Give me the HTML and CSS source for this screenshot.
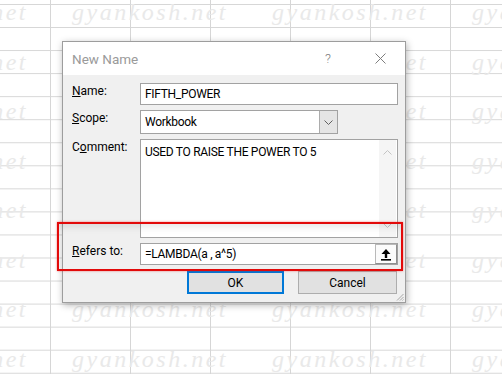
FILE: index.html
```html
<!DOCTYPE html>
<html>
<head>
<meta charset="utf-8">
<link rel="stylesheet" href="styles.css">
</head>
<body>
<div class="sheet">
  <div class="watermark">
    <div class="wm-row"><span>gyankosh.net</span><span>gyankosh.net</span><span>gyankosh.net</span><span>gyankosh.net</span></div>
    <div class="wm-row"><span>gyankosh.net</span><span class="covered">gyankosh.net</span><span>gyankosh.net</span><span>gyankosh.net</span></div>
    <div class="wm-row"><span>gyankosh.net</span><span class="covered">gyankosh.net</span><span>gyankosh.net</span><span>gyankosh.net</span></div>
    <div class="wm-row"><span>gyankosh.net</span><span class="covered">gyankosh.net</span><span>gyankosh.net</span><span>gyankosh.net</span></div>
    <div class="wm-row"><span>gyankosh.net</span><span class="covered">gyankosh.net</span><span>gyankosh.net</span><span>gyankosh.net</span></div>
    <div class="wm-row"><span>gyankosh.net</span><span class="covered">gyankosh.net</span><span>gyankosh.net</span><span>gyankosh.net</span></div>
    <div class="wm-row"><span>gyankosh.net</span><span>gyankosh.net</span><span>gyankosh.net</span><span>gyankosh.net</span></div>
    <div class="wm-row"><span>gyankosh.net</span><span>gyankosh.net</span><span>gyankosh.net</span><span>gyankosh.net</span></div>
  </div>

  <div class="dialog">
    <div class="titlebar">
      <span class="title">New Name</span>
      <span class="help">?</span>
      <span class="close">
        <svg width="11" height="11" viewBox="0 0 11 11"><path d="M0.5 0.5 L10.5 10.5 M10.5 0.5 L0.5 10.5" stroke="#7d7d7d" stroke-width="1" fill="none"/></svg>
      </span>
    </div>
    <div class="form">
      <div class="label"><u>N</u>ame:</div>
      <div class="field"><span class="val">FIFTH_POWER</span></div>

      <div class="label"><u>S</u>cope:</div>
      <div class="combo">
        <span class="val">Workbook</span>
        <span class="drop">
          <svg width="9" height="5" viewBox="0 0 9 5"><path d="M0.5 0.5 L4.5 4.5 L8.5 0.5" stroke="#606060" stroke-width="1" fill="none"/></svg>
        </span>
      </div>

      <div class="label">C<u>o</u>mment:</div>
      <div class="memo">
        <div class="memo-text">USED TO RAISE THE POWER TO 5</div>
        <div class="scroll">
          <svg width="9" height="5" viewBox="0 0 9 5"><path d="M0.5 4.5 L4.5 0.5 L8.5 4.5" stroke="#c4c4c4" stroke-width="1" fill="none"/></svg>
          <svg width="9" height="5" viewBox="0 0 9 5"><path d="M0.5 0.5 L4.5 4.5 L8.5 0.5" stroke="#c4c4c4" stroke-width="1" fill="none"/></svg>
        </div>
      </div>

      <div class="label"><u>R</u>efers to:</div>
      <div class="field refers">
        <span class="val">=LAMBDA(a , a^5)</span>
        <span class="collapse">
          <svg width="12" height="13" viewBox="0 0 12 13">
            <path d="M6 1 L10.5 6 L7.2 6 L7.2 10 L4.8 10 L4.8 6 L1.5 6 Z" fill="#000"/>
            <rect x="1" y="11" width="10" height="1.6" fill="#000"/>
          </svg>
        </span>
      </div>

      <div class="buttons">
        <button class="btn ok">OK</button>
        <button class="btn cancel">Cancel</button>
      </div>
    </div>
    <svg class="grip" width="9" height="9" viewBox="0 0 9 9"><path d="M8.5 2 L2 8.5 M8.5 5 L5 8.5 M8.5 7.5 L7.5 8.5" stroke="#a8a8a8" stroke-width="1" fill="none"/></svg>
  </div>

  <div class="highlight"></div>
</div>
</body>
</html>
```

FILE: styles.css
```css
* { box-sizing: border-box; }
html, body { margin: 0; padding: 0; }
body {
  width: 502px;
  height: 374px;
  overflow: hidden;
  font-family: Roboto, "Noto Sans", sans-serif;
  background-color: #fff;
  background-image:
    linear-gradient(to right, #d6d6d6 1px, transparent 1px),
    linear-gradient(to bottom, #d6d6d6 1px, transparent 1px);
  background-size: 80px 100%, 100% 23.06px;
  background-position: 50px 0, 0 4px;
}
.sheet {
  position: relative;
  width: 502px;
  height: 374px;
  overflow: hidden;
}
.watermark {
  position: absolute;
  left: -128px;
  top: -12px;
  display: flex;
  flex-direction: column;
}
.wm-row {
  display: flex;
  height: 49.5px;
  align-items: center;
}
.wm-row span {
  flex: none;
  width: 200px;
  font-family: "Liberation Serif", serif;
  font-style: italic;
  font-size: 24px;
  letter-spacing: 2.5px;
  color: #e9e9e9;
  white-space: nowrap;
}
.wm-row span.covered {
  visibility: hidden;
}

.dialog {
  position: absolute;
  left: 62px;
  top: 41px;
  width: 344px;
  border: 1px solid #9d9d9d;
  background: #f0f0f0;
  box-shadow: 1px 2px 7px rgba(0, 0, 0, 0.3);
  display: flex;
  flex-direction: column;
}
.titlebar {
  height: 33px;
  background: #fff;
  display: flex;
  align-items: center;
  gap: 6px;
  padding-right: 2px;
}
.title {
  flex: 1;
  padding-left: 9px;
  font-size: 13.5px;
  color: #9a9a9a;
}
.help {
  width: 46px;
  text-align: center;
  font-size: 13px;
  font-weight: 300;
  color: #808080;
}
.close {
  width: 46px;
  display: flex;
  justify-content: center;
}
.form {
  display: grid;
  grid-template-columns: 68px 1fr;
  row-gap: 5px;
  padding: 8px 7px 8px 9px;
  font-size: 12px;
  line-height: 14px;
  color: #000;
}
.label {
  padding-top: 1px;
}
.field {
  height: 22px;
  border: 1px solid #a2a2a2;
  background: #fff;
  display: flex;
  align-items: center;
  padding-left: 4px;
}
.val {
  flex: 1;
  white-space: nowrap;
  letter-spacing: -0.3px;
}
.combo {
  width: 198px;
  height: 24px;
  border: 1px solid #a2a2a2;
  background: #fff;
  display: flex;
  align-items: center;
  padding-left: 4px;
}
.drop {
  width: 18px;
  align-self: stretch;
  background: #e5e5e5;
  border-left: 1px solid #acacac;
  display: flex;
  align-items: center;
  justify-content: center;
}
.memo {
  height: 99px;
  border: 1px solid #a2a2a2;
  background: #fff;
  display: flex;
}
.memo-text {
  flex: 1;
  padding: 5px 4px 0;
  letter-spacing: -0.3px;
}
.scroll {
  width: 17px;
  margin-right: 1px;
  background: #f5f5f5;
  display: flex;
  flex-direction: column;
  justify-content: space-between;
  align-items: center;
  padding: 10px 0 9px;
}
.refers { padding-right: 0; }
.collapse {
  width: 22px;
  align-self: stretch;
  background: #fbfbfb;
  border: 1px solid #b9b9b9;
  border-right-color: #8f8f8f;
  border-bottom-color: #8f8f8f;
  display: flex;
  align-items: center;
  justify-content: center;
}
.buttons {
  grid-column: 1 / -1;
  display: flex;
  justify-content: flex-end;
  gap: 14px;
  margin-top: 1px;
  margin-right: 1px;
}
.btn {
  height: 23px;
  font-family: inherit;
  font-size: 12px;
  color: #000;
  background: #e1e1e1;
  border: 1px solid #adadad;
  padding: 0;
}
.ok {
  width: 97px;
  border: 2px solid #0078d7;
}
.cancel {
  width: 99px;
}
.grip {
  position: absolute;
  right: 1px;
  bottom: 1px;
}
.highlight {
  position: absolute;
  left: 57px;
  top: 222px;
  width: 346px;
  height: 49px;
  border: 2px solid #e20a0a;
  box-shadow: 0 0 2px rgba(226, 10, 10, 0.5), inset 0 6px 8px -4px rgba(0, 0, 0, 0.12);
}
```
